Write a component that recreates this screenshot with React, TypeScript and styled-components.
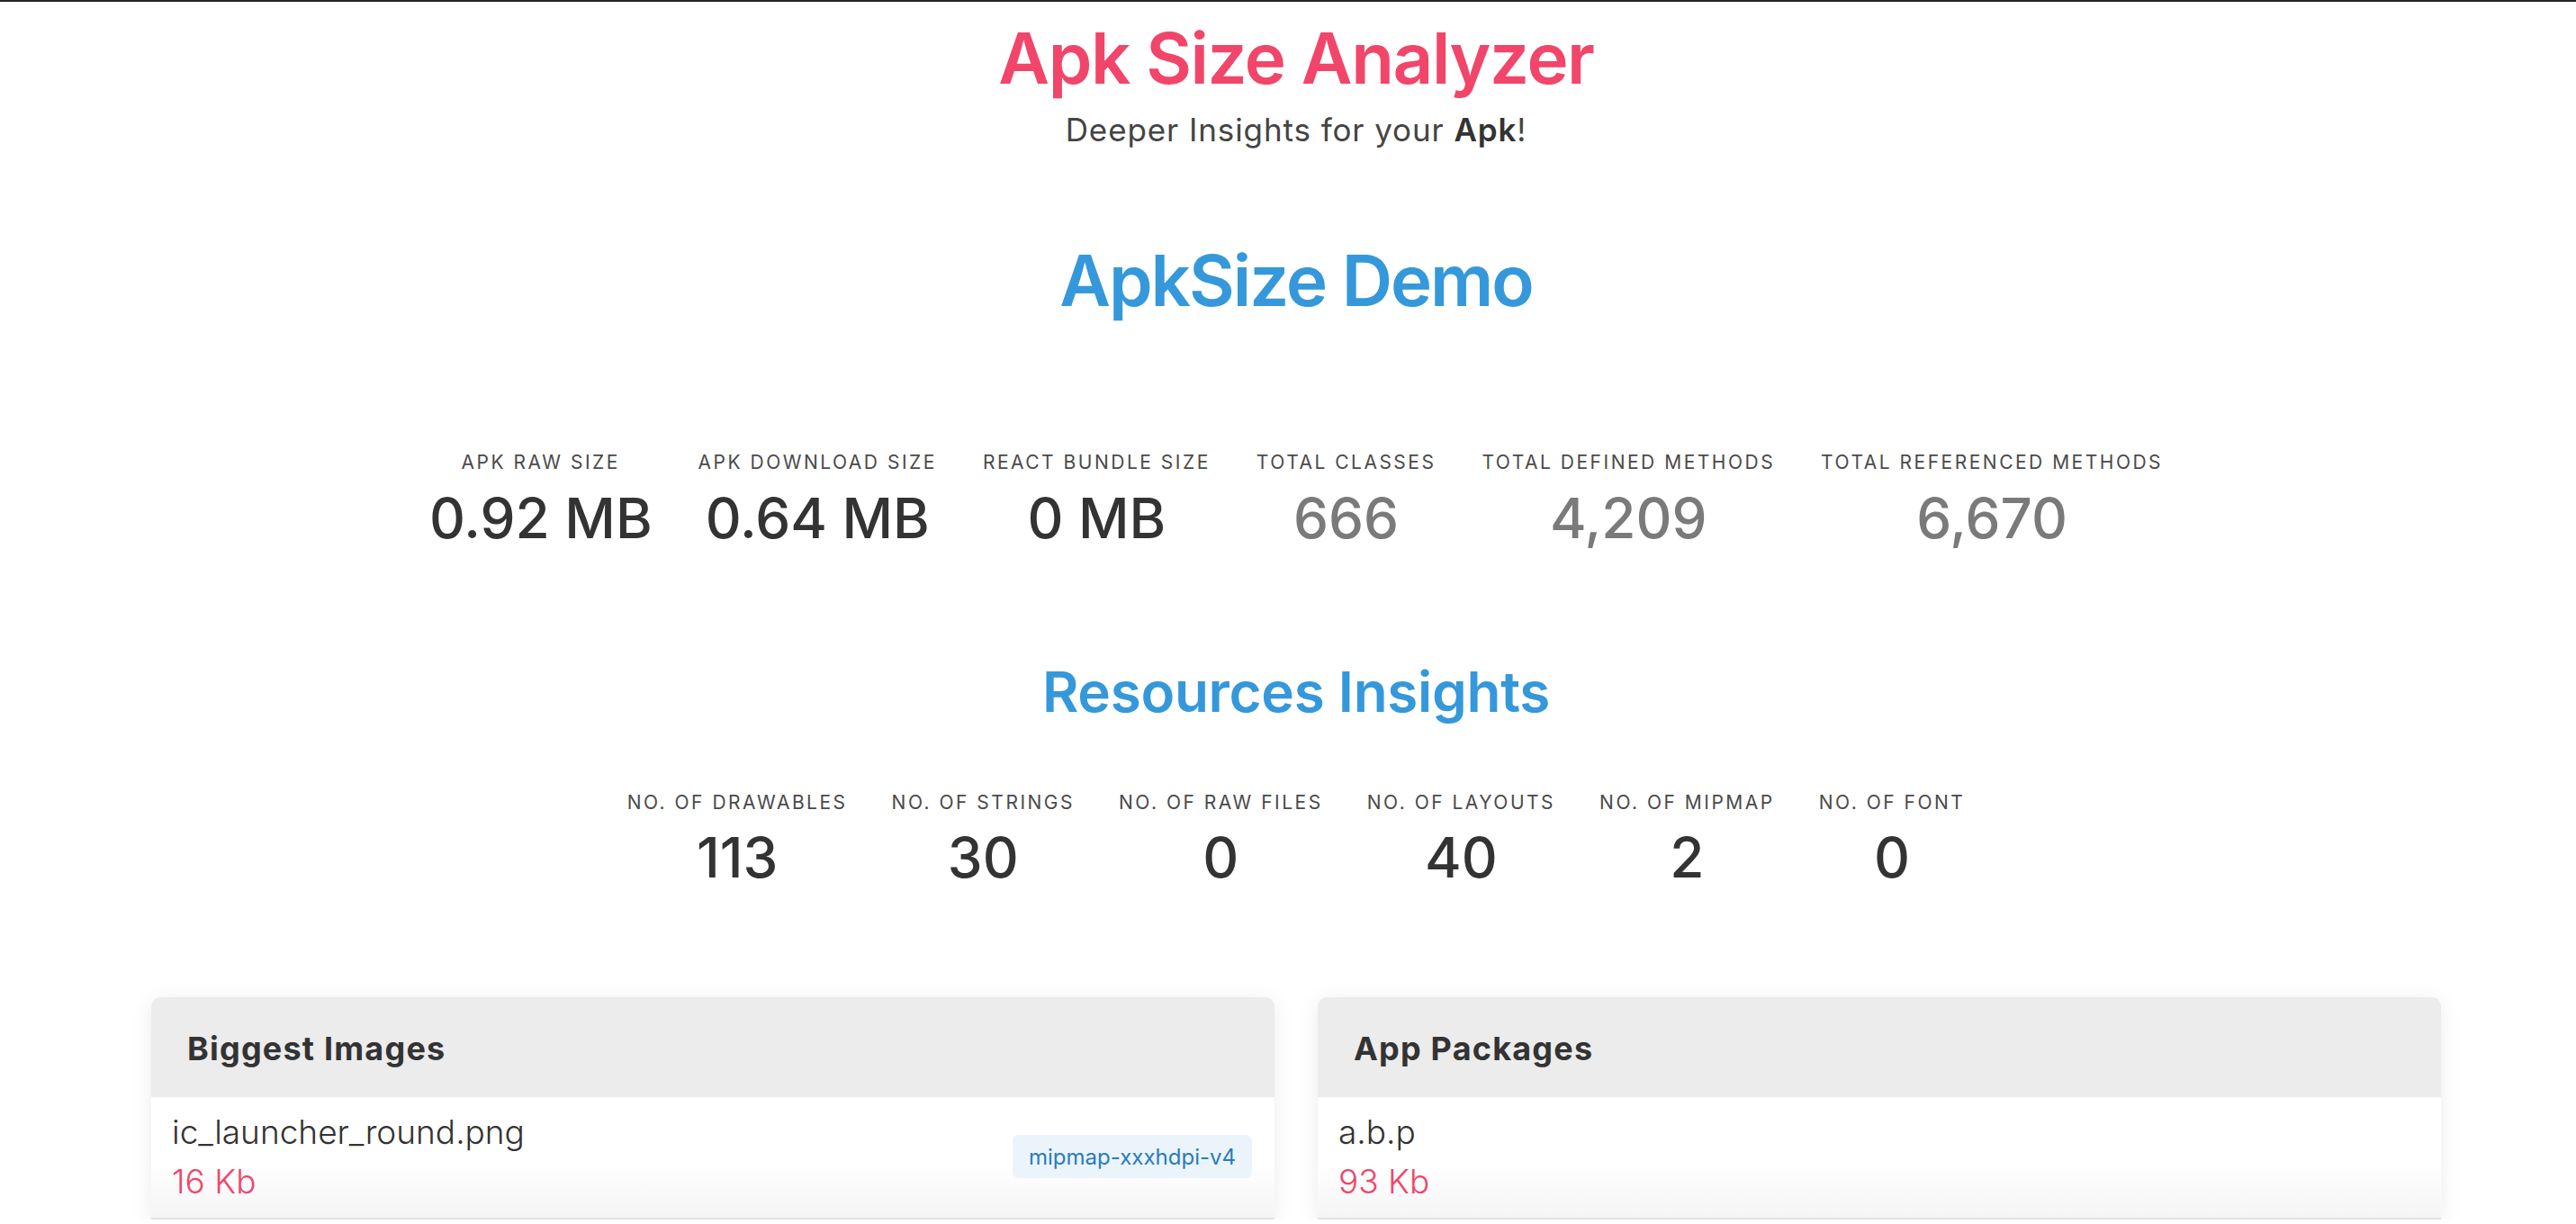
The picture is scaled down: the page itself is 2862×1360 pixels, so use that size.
import React from "react";
import styled, { createGlobalStyle } from "styled-components";

const GlobalStyle = createGlobalStyle`
  html, body {
    margin: 0;
    padding: 0;
    background: #ffffff;
    overflow: hidden;
  }
  body {
    font-family: Inter, "Noto Sans", "Liberation Sans", sans-serif;
    color: #333333;
  }
  * { box-sizing: border-box; }
`;

const TopBar = styled.div`
  height: 2px;
  background: #262626;
`;

const Page = styled.main`
  width: 2880px;
  display: flex;
  flex-direction: column;
  align-items: center;
`;

const Title = styled.h1`
  margin: 16px 0 0;
  font-size: 78px;
  line-height: 1.2;
  font-weight: 600;
  color: #f2456a;
  letter-spacing: -1.4px;
`;

const Subtitle = styled.p`
  margin: 11px 0 0;
  font-size: 35px;
  line-height: 1.2;
  font-weight: 400;
  color: #444444;
  letter-spacing: 0.9px;
  b {
    font-weight: 600;
    color: #333333;
  }
`;

const SectionTitle = styled.h2<{ $size: number; $top: number; $spacing: number }>`
  margin: ${(p) => p.$top}px 0 0;
  font-size: ${(p) => p.$size}px;
  line-height: 1.2;
  font-weight: 600;
  color: #3498db;
  letter-spacing: ${(p) => p.$spacing}px;
`;

const StatsRow = styled.div<{ $top: number; $gap: number }>`
  margin-top: ${(p) => p.$top}px;
  display: flex;
  justify-content: center;
  gap: ${(p) => p.$gap}px;
`;

const Stat = styled.div<{ $gap: number }>`
  display: flex;
  flex-direction: column;
  align-items: center;
  gap: ${(p) => p.$gap}px;
`;

const StatLabel = styled.div`
  font-size: 21px;
  line-height: 1.2;
  letter-spacing: 2.5px;
  color: #4a4a4a;
  text-transform: uppercase;
  white-space: nowrap;
`;

const StatValue = styled.div<{ $muted?: boolean }>`
  font-size: 62px;
  line-height: 1.2;
  font-weight: 500;
  color: ${(p) => (p.$muted ? "#7a7a7a" : "#333333")};
  white-space: nowrap;
`;

const Cards = styled.div`
  margin-top: 117px;
  display: grid;
  grid-template-columns: 1248px 1248px;
  gap: 48px;
`;

const Card = styled.section`
  border-radius: 10px 10px 0 0;
  background: #ffffff;
  box-shadow: 0 4px 24px rgba(0, 0, 0, 0.08);
  overflow: hidden;
`;

const CardHeader = styled.h3`
  margin: 0;
  padding: 36px 40px 32px;
  background: #ececec;
  font-size: 36px;
  line-height: 1.2;
  font-weight: 700;
  color: #333333;
  letter-spacing: 1.2px;
`;

const ListRow = styled.div`
  display: flex;
  align-items: center;
  justify-content: space-between;
  padding: 11px 25px 12px 23px;
  background: linear-gradient(to bottom, #ffffff 55%, #f5f5f5 100%);
  border-bottom: 2px solid #e3e3e3;
`;

const RowText = styled.div`
  display: flex;
  flex-direction: column;
`;

const ItemName = styled.div`
  font-size: 37px;
  line-height: 1.5;
  font-weight: 300;
  color: #333333;
`;

const ItemSize = styled.div`
  font-size: 37px;
  line-height: 1.5;
  font-weight: 300;
  color: #f2456a;
`;

const Badge = styled.span`
  display: inline-flex;
  align-items: center;
  height: 48px;
  padding: 0 18px;
  border-radius: 7px;
  background: #ebf4fb;
  color: #2a7bbd;
  font-size: 24px;
  font-weight: 400;
`;

const mainStats = [
  { label: "APK RAW SIZE", value: "0.92 MB" },
  { label: "APK DOWNLOAD SIZE", value: "0.64 MB" },
  { label: "REACT BUNDLE SIZE", value: "0 MB" },
  { label: "TOTAL CLASSES", value: "666", muted: true },
  { label: "TOTAL DEFINED METHODS", value: "4,209", muted: true },
  { label: "TOTAL REFERENCED METHODS", value: "6,670", muted: true },
];

const resStats = [
  { label: "NO. OF DRAWABLES", value: "113" },
  { label: "NO. OF STRINGS", value: "30" },
  { label: "NO. OF RAW FILES", value: "0" },
  { label: "NO. OF LAYOUTS", value: "40" },
  { label: "NO. OF MIPMAP", value: "2" },
  { label: "NO. OF FONT", value: "0" },
];

export default function App() {
  return (
    <>
      <GlobalStyle />
      <TopBar />
      <Page>
        <Title>Apk Size Analyzer</Title>
        <Subtitle>
          Deeper Insights for your <b>Apk</b>!
        </Subtitle>
        <SectionTitle $size={78} $top={100} $spacing={-2}>
          ApkSize Demo
        </SectionTitle>
        <StatsRow $top={143} $gap={51}>
          {mainStats.map((s) => (
            <Stat key={s.label} $gap={13}>
              <StatLabel>{s.label}</StatLabel>
              <StatValue $muted={s.muted}>{s.value}</StatValue>
            </Stat>
          ))}
        </StatsRow>
        <SectionTitle $size={62} $top={118} $spacing={-0.3}>
          Resources Insights
        </SectionTitle>
        <StatsRow $top={73} $gap={49}>
          {resStats.map((s) => (
            <Stat key={s.label} $gap={12}>
              <StatLabel>{s.label}</StatLabel>
              <StatValue>{s.value}</StatValue>
            </Stat>
          ))}
        </StatsRow>
        <Cards>
          <Card>
            <CardHeader>Biggest Images</CardHeader>
            <ListRow>
              <RowText>
                <ItemName>ic_launcher_round.png</ItemName>
                <ItemSize>16 Kb</ItemSize>
              </RowText>
              <Badge>mipmap-xxxhdpi-v4</Badge>
            </ListRow>
          </Card>
          <Card>
            <CardHeader>App Packages</CardHeader>
            <ListRow>
              <RowText>
                <ItemName>a.b.p</ItemName>
                <ItemSize>93 Kb</ItemSize>
              </RowText>
            </ListRow>
          </Card>
        </Cards>
      </Page>
    </>
  );
}
